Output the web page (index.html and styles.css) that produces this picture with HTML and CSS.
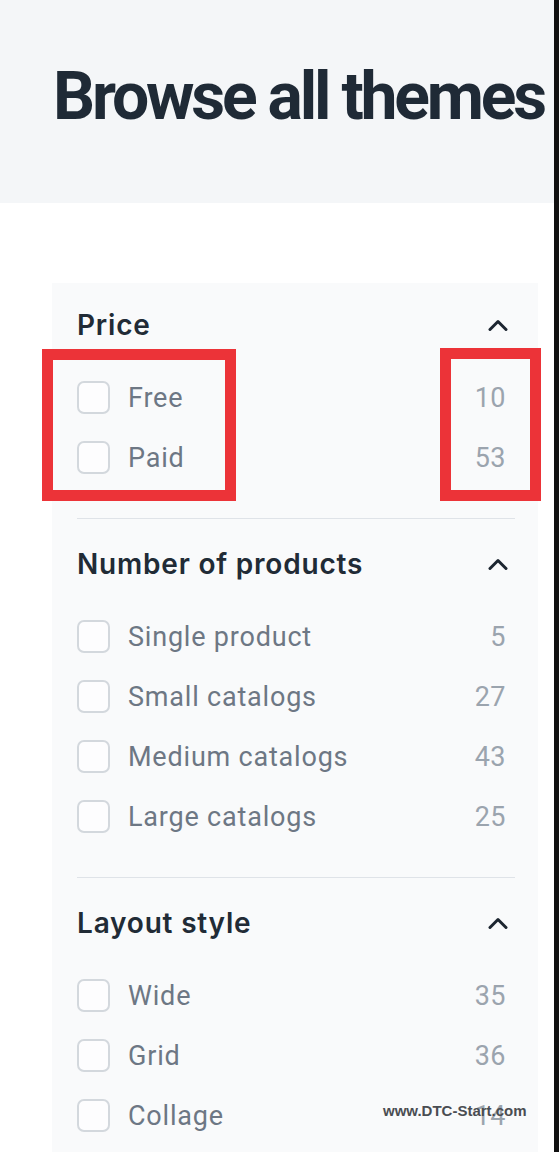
FILE: index.html
```html
<!DOCTYPE html>
<html lang="en">
<head>
<meta charset="utf-8">
<title>Browse all themes</title>
<link rel="stylesheet" href="styles.css">
</head>
<body>
<div class="frame">
  <header class="hero">
    <h1 class="title">Browse all themes</h1>
  </header>
  <aside class="filters">
    <section class="group">
      <div class="group-head">
        <h2 class="group-title">Price</h2>
        <svg class="chevron" viewBox="0 0 20 12" width="20" height="12"><polyline points="2,10.5 10,2.5 18,10.5"/></svg>
      </div>
      <ul class="options">
        <li class="option"><span class="box"></span><span class="label">Free</span><span class="count">10</span></li>
        <li class="option"><span class="box"></span><span class="label">Paid</span><span class="count">53</span></li>
      </ul>
    </section>
    <section class="group">
      <div class="group-head">
        <h2 class="group-title">Number of products</h2>
        <svg class="chevron" viewBox="0 0 20 12" width="20" height="12"><polyline points="2,10.5 10,2.5 18,10.5"/></svg>
      </div>
      <ul class="options">
        <li class="option"><span class="box"></span><span class="label">Single product</span><span class="count">5</span></li>
        <li class="option"><span class="box"></span><span class="label">Small catalogs</span><span class="count">27</span></li>
        <li class="option"><span class="box"></span><span class="label">Medium catalogs</span><span class="count">43</span></li>
        <li class="option"><span class="box"></span><span class="label">Large catalogs</span><span class="count">25</span></li>
      </ul>
    </section>
    <section class="group">
      <div class="group-head">
        <h2 class="group-title">Layout style</h2>
        <svg class="chevron" viewBox="0 0 20 12" width="20" height="12"><polyline points="2,10.5 10,2.5 18,10.5"/></svg>
      </div>
      <ul class="options">
        <li class="option"><span class="box"></span><span class="label">Wide</span><span class="count">35</span></li>
        <li class="option"><span class="box"></span><span class="label">Grid</span><span class="count">36</span></li>
        <li class="option"><span class="box"></span><span class="label">Collage</span><span class="count">14</span></li>
      </ul>
    </section>
  </aside>
  <div class="mark mark-left"></div>
  <div class="mark mark-right"></div>
  <div class="watermark">www.DTC-Start.com</div>
</div>
</body>
</html>
```

FILE: styles.css
```css
* { box-sizing: border-box; }

html, body {
  margin: 0;
  padding: 0;
  background: #ffffff;
}

.frame {
  position: relative;
  width: 559px;
  height: 1152px;
  overflow: hidden;
  border-right: 5px solid #111111;
}

.hero {
  height: 203px;
  background: #f4f6f8;
  padding: 57px 0 0 53px;
}

.title {
  margin: 0;
  font-family: Roboto, Inter, "Noto Sans", sans-serif;
  font-weight: 700;
  font-size: 66px;
  line-height: 80px;
  letter-spacing: -3.2px;
  color: #1f2a36;
  white-space: nowrap;
}

.filters {
  margin: 80px 0 0 52px;
  width: 486px;
  background: #f9fafb;
  padding: 0 23px 0 25px;
  min-height: 900px;
}

.group {
  padding-top: 27px;
  padding-bottom: 31px;
  border-top: 1px solid #dfe3e8;
}

.group:first-child {
  padding-top: 24px;
  border-top: none;
}

.group-head {
  display: flex;
  align-items: center;
  justify-content: space-between;
  height: 36px;
  padding-right: 7px;
}

.group-title {
  margin: 0;
  font-family: Inter, "Noto Sans", sans-serif;
  font-weight: 600;
  font-size: 28px;
  line-height: 36px;
  letter-spacing: 0.8px;
  color: #212b36;
}

.chevron {
  display: block;
  fill: none;
  stroke: #1c2530;
  stroke-width: 3;
  stroke-linecap: round;
  stroke-linejoin: round;
}

.options {
  list-style: none;
  margin: 24px 0 0;
  padding: 0;
}

.option {
  display: flex;
  align-items: center;
  height: 60px;
  padding: 1px 9px 0 0;
  font-family: Roboto, "Liberation Sans", sans-serif;
  font-size: 27px;
}

.box {
  flex: none;
  width: 33px;
  height: 33px;
  border: 2px solid #d3d8dd;
  border-radius: 7px;
  background: #fdfdfe;
  margin-right: 18px;
}

.label {
  flex: 1;
  color: #6d7784;
  letter-spacing: 0.8px;
}

.count {
  color: #9ba4ae;
  letter-spacing: 0.5px;
}

.mark {
  position: absolute;
  border: 11px solid #ec3338;
}

.mark-left {
  left: 42px;
  top: 349px;
  width: 194px;
  height: 152px;
}

.mark-right {
  left: 440px;
  top: 348px;
  width: 101px;
  height: 153px;
}

.watermark {
  position: absolute;
  left: 383px;
  top: 1102px;
  font-family: "Liberation Sans", Arial, sans-serif;
  font-weight: 700;
  font-size: 15px;
  line-height: 18px;
  color: #4a4d52;
}
```
